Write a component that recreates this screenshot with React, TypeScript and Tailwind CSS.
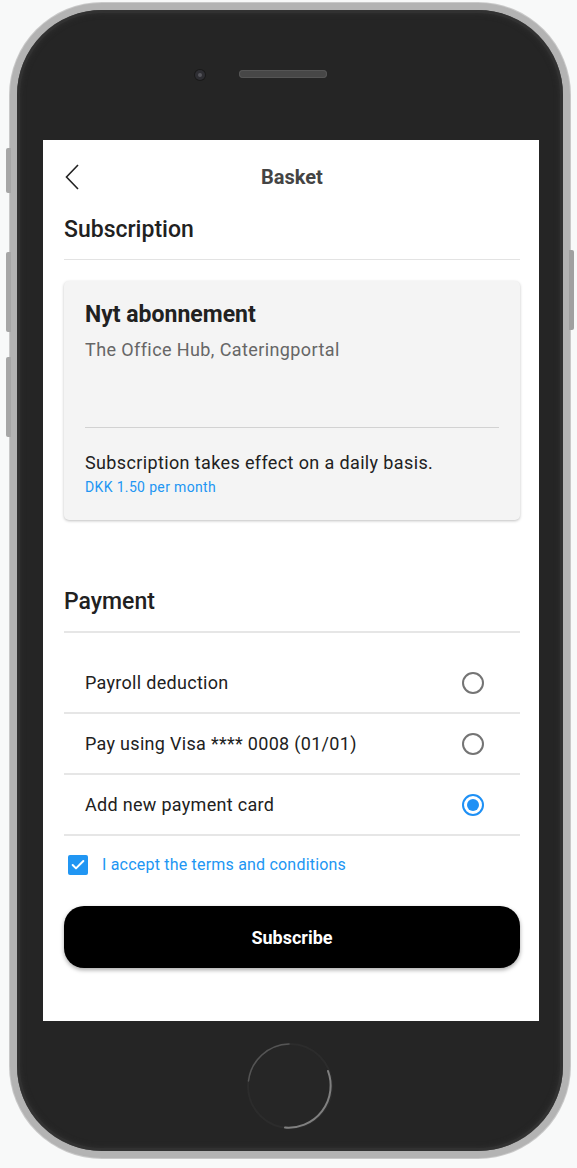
import { Check } from 'lucide-react';

const paymentOptions = [
  { id: 'payroll', label: 'Payroll deduction' },
  { id: 'visa', label: 'Pay using Visa **** 0008 (01/01)' },
  { id: 'new', label: 'Add new payment card' },
];

function Radio({ checked }: { checked: boolean }) {
  return checked ? (
    <span className="flex h-[22px] w-[22px] items-center justify-center rounded-full border-2 border-[#1e90f5]">
      <span className="h-[12px] w-[12px] rounded-full bg-[#1e90f5]" />
    </span>
  ) : (
    <span className="h-[22px] w-[22px] rounded-full border-2 border-[#747474]" />
  );
}

function BackChevron() {
  return (
    <svg width="14" height="26" viewBox="0 0 14 26" className="ml-[1px]">
      <polyline points="13,1 1.5,13 13,25" fill="none" stroke="#222" strokeWidth="1.6" strokeLinejoin="miter" />
    </svg>
  );
}

function HomeButton() {
  return (
    <svg width="90" height="90" viewBox="0 0 90 90">
      <circle cx="45" cy="45" r="42" fill="#262626" stroke="#2c2c2c" strokeWidth="2" />
      <path d="M44 3 A42 42 0 0 0 3.5 40" fill="none" stroke="#555" strokeWidth="1.5" strokeLinecap="round" />
      <path d="M83 30 A42 42 0 0 1 40 86.5" fill="none" stroke="#808080" strokeWidth="2" strokeLinecap="round" />
    </svg>
  );
}

export default function App() {
  const selected = 'new';

  return (
    <div className="relative h-[1168px] w-[577px] overflow-hidden bg-[#f8f9f9] pt-[3px] pl-[10px]" style={{ fontFamily: 'Roboto, "Liberation Sans", sans-serif' }}>
      {/* side buttons */}
      <div className="absolute left-[6px] top-[148px] h-[45px] w-[5px] rounded-l-[2px] bg-[#a6a6a6]" />
      <div className="absolute left-[6px] top-[252px] h-[80px] w-[5px] rounded-l-[2px] bg-[#a6a6a6]" />
      <div className="absolute left-[6px] top-[357px] h-[80px] w-[5px] rounded-l-[2px] bg-[#a6a6a6]" />
      <div className="absolute left-[569px] top-[250px] h-[80px] w-[5px] rounded-r-[2px] bg-[#a0a0a0]" />

      {/* phone body */}
      <div className="h-[1155px] w-[560px] rounded-[92px] border-[7px] border-[#b3b3b3] bg-[#252525] shadow-[inset_0_0_0_3px_#2f2f2f,0_0_0_1px_#c9c9c9]">
        <div className="flex h-full flex-col rounded-[85px] shadow-[inset_0_0_6px_2px_#353535]">
          {/* top bezel */}
          <div className="flex h-[130px] items-start pt-[59px] pl-[178px]">
            <span className="mt-[1px] flex h-[10px] w-[10px] items-center justify-center rounded-full bg-[#2e2e33] shadow-[0_0_0_1px_#1a1a1a]">
              <span className="h-[4px] w-[4px] rounded-full bg-[#55555c]" />
            </span>
            <span className="ml-[34px] mt-[1px] h-[8px] w-[88px] rounded-full bg-[#474747] shadow-[inset_0_0_0_1px_#555]" />
          </div>

          {/* screen */}
          <div className="ml-[26px] flex h-[881px] w-[496px] flex-col bg-white pl-[21px] pr-[19px] text-[#212121]">
            <div className="mt-[22px] grid h-[28px] grid-cols-[1fr_auto_1fr] items-center">
              <BackChevron />
              <span className="text-[20px] font-bold text-[#444]">Basket</span>
              <span />
            </div>

            <h2 className="mt-[26px] border-b border-[#e3e3e3] pb-[15px] text-[23px] leading-[28px] font-medium">Subscription</h2>

            <div className="mt-[21px] rounded-[5px] bg-[#f4f4f4] px-[21px] pt-[20px] pb-[24px] shadow-[0_1px_3px_rgba(0,0,0,0.25)]">
              <div className="text-[23px] leading-[28px] font-bold">Nyt abonnement</div>
              <div className="mt-[9px] text-[18px] leading-[24px] tracking-[0.4px] text-[#666]">The Office Hub, Cateringportal</div>
              <div className="mt-[65px] border-t border-[#d2d2d2]" />
              <div className="mt-[23px] text-[18px] leading-[24px] tracking-[0.37px]">Subscription takes effect on a daily basis.</div>
              <div className="mt-[3px] text-[14px] leading-[18px] tracking-[0.35px] text-[#2196f3]">DKK 1.50 per month</div>
            </div>

            <h2 className="mt-[68px] border-b-2 border-[#e6e6e6] pb-[15px] text-[23px] leading-[28px] font-medium">Payment</h2>

            <div className="mt-[20px] flex flex-col">
              {paymentOptions.map(o => (
                <div key={o.id} className="flex h-[61px] items-center justify-between border-b-2 border-[#e6e6e6] pl-[21px] pr-[36px]">
                  <span className="text-[18px] tracking-[0.3px]">{o.label}</span>
                  <Radio checked={o.id === selected} />
                </div>
              ))}
            </div>

            <div className="mt-[19px] ml-[4px] flex items-center gap-[14px]">
              <span className="flex h-[20px] w-[20px] items-center justify-center rounded-[2px] bg-[#2196f3]">
                <Check size={16} strokeWidth={3} className="text-white" />
              </span>
              <span className="text-[16px] leading-[20px] tracking-[0.2px] text-[#2196f3]">I accept the terms and conditions</span>
            </div>

            <button className="mt-[31px] h-[62px] w-full rounded-[20px] bg-black text-[18px] font-bold text-white shadow-[0_2px_4px_rgba(0,0,0,0.35)]">
              Subscribe
            </button>
          </div>

          {/* bottom bezel */}
          <div className="flex flex-1 justify-center pt-[20px]">
            <HomeButton />
          </div>
        </div>
      </div>
    </div>
  );
}
